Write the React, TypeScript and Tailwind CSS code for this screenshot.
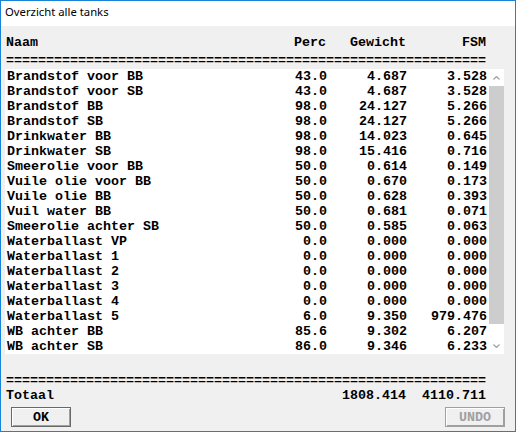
import React from "react";

type Tank = { naam: string; perc: string; gewicht: string; fsm: string };

const tanks: Tank[] = [
  { naam: "Brandstof voor BB", perc: "43.0", gewicht: "4.687", fsm: "3.528" },
  { naam: "Brandstof voor SB", perc: "43.0", gewicht: "4.687", fsm: "3.528" },
  { naam: "Brandstof BB", perc: "98.0", gewicht: "24.127", fsm: "5.266" },
  { naam: "Brandstof SB", perc: "98.0", gewicht: "24.127", fsm: "5.266" },
  { naam: "Drinkwater BB", perc: "98.0", gewicht: "14.023", fsm: "0.645" },
  { naam: "Drinkwater SB", perc: "98.0", gewicht: "15.416", fsm: "0.716" },
  { naam: "Smeerolie voor BB", perc: "50.0", gewicht: "0.614", fsm: "0.149" },
  { naam: "Vuile olie voor BB", perc: "50.0", gewicht: "0.670", fsm: "0.173" },
  { naam: "Vuile olie BB", perc: "50.0", gewicht: "0.628", fsm: "0.393" },
  { naam: "Vuil water BB", perc: "50.0", gewicht: "0.681", fsm: "0.071" },
  { naam: "Smeerolie achter SB", perc: "50.0", gewicht: "0.585", fsm: "0.063" },
  { naam: "Waterballast VP", perc: "0.0", gewicht: "0.000", fsm: "0.000" },
  { naam: "Waterballast 1", perc: "0.0", gewicht: "0.000", fsm: "0.000" },
  { naam: "Waterballast 2", perc: "0.0", gewicht: "0.000", fsm: "0.000" },
  { naam: "Waterballast 3", perc: "0.0", gewicht: "0.000", fsm: "0.000" },
  { naam: "Waterballast 4", perc: "0.0", gewicht: "0.000", fsm: "0.000" },
  { naam: "Waterballast 5", perc: "6.0", gewicht: "9.350", fsm: "979.476" },
  { naam: "WB achter BB", perc: "85.6", gewicht: "9.302", fsm: "6.207" },
  { naam: "WB achter SB", perc: "86.0", gewicht: "9.346", fsm: "6.233" },
];

const rule = "=".repeat(60);

// fixed-width report columns (8px per character)
const Row = ({ cells }: { cells: [string, string, string, string] }) => (
  <div className="grid h-[15px] grid-cols-[272px_48px_80px_80px] whitespace-pre">
    <span>{cells[0]}</span>
    <span className="text-right">{cells[1]}</span>
    <span className="text-right">{cells[2]}</span>
    <span className="text-right">{cells[3]}</span>
  </div>
);

const Rule = () => (
  <div className="h-[15px] whitespace-pre">
    <span className="relative top-[3px]">{rule}</span>
  </div>
);

const Chevron = ({ up }: { up?: boolean }) => (
  <svg width="7" height="4" viewBox="0 0 7 4" className="block">
    <path
      d={up ? "M0.5 3.5 L3.5 0.5 L6.5 3.5" : "M0.5 0.5 L3.5 3.5 L6.5 0.5"}
      fill="none"
      stroke="#a0a0a0"
      strokeWidth="1.2"
    />
  </svg>
);

const Button = ({ label, disabled }: { label: string; disabled?: boolean }) => (
  <button
    type="button"
    disabled={disabled}
    className={`flex h-[20px] w-[60px] items-center justify-center border bg-[#f0f0f0] text-[13.333px] font-bold leading-[15px] shadow-[inset_1px_1px_0_#ffffff,inset_-1px_-1px_0_#a0a0a0] ${
      disabled ? "border-[#a0a0a0] text-[#a0a0a0]" : "border-[#696969] text-black"
    }`}
  >
    {label}
  </button>
);

export default function App() {
  return (
    <div className="flex h-[432px] w-[516px] flex-col border border-[#1883d7] bg-[#f0f0f0] text-black">
      {/* Title bar */}
      <div className="flex h-[25px] shrink-0 items-center bg-white pl-[4px] pb-[2px] font-['Segoe_UI','Noto_Sans',sans-serif] text-[11.3px]">
        Overzicht alle tanks
      </div>

      <div className="flex flex-1 flex-col font-['Liberation_Mono',monospace] text-[13.333px] font-bold leading-[15px]">
        <div className="pl-[5px] pt-[9px]">
          <Row cells={["Naam", "Perc", "Gewicht", "FSM"]} />
          <Rule />
        </div>

        {/* List box */}
        <div className="mt-[4px] ml-[4px] flex h-[285px] w-[499px]">
          <div className="flex-1 bg-white pl-[2px]">
            {tanks.map((t) => (
              <Row key={t.naam} cells={[t.naam, t.perc, t.gewicht, t.fsm]} />
            ))}
          </div>
          <div className="flex w-[15px] flex-col bg-white">
            <div className="flex h-[17px] items-center justify-center">
              <Chevron up />
            </div>
            <div className="flex-1">
              <div className="h-[238px] bg-[#cdcdcd]" />
            </div>
            <div className="flex h-[17px] items-center justify-center">
              <Chevron />
            </div>
          </div>
        </div>

        <div className="pl-[5px] pt-[16px]">
          <Rule />
          <div className="mt-[3px]">
            <Row cells={["Totaal", "", "1808.414", "4110.711"]} />
          </div>
        </div>

        <div className="mt-[4px] flex justify-between pl-[10px] pr-[10px]">
          <Button label="OK" />
          <Button label="UNDO" disabled />
        </div>
      </div>
    </div>
  );
}
